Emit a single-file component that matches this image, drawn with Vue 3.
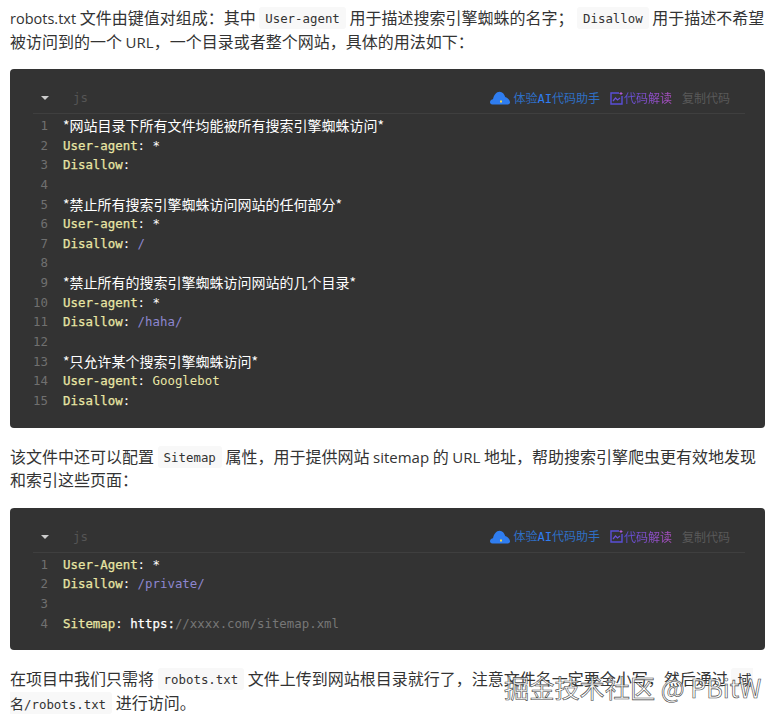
<script setup>
const blockA = [
  [['zh', '*网站目录下所有文件均能被所有搜索引擎蜘蛛访问*']],
  [['key', 'User-agent'], ['pl', ': *']],
  [['key', 'Disallow'], ['pl', ':']],
  [],
  [['zh', '*禁止所有搜索引擎蜘蛛访问网站的任何部分*']],
  [['key', 'User-agent'], ['pl', ': *']],
  [['key', 'Disallow'], ['pl', ': '], ['path', '/']],
  [],
  [['zh', '*禁止所有的搜索引擎蜘蛛访问网站的几个目录*']],
  [['key', 'User-agent'], ['pl', ': *']],
  [['key', 'Disallow'], ['pl', ': '], ['path', '/haha/']],
  [],
  [['zh', '*只允许某个搜索引擎蜘蛛访问*']],
  [['key', 'User-agent'], ['pl', ': '], ['val', 'Googlebot']],
  [['key', 'Disallow'], ['pl', ':']],
]
const blockB = [
  [['key', 'User-Agent'], ['pl', ': *']],
  [['key', 'Disallow'], ['pl', ': '], ['path', '/private/']],
  [],
  [['key', 'Sitemap'], ['pl', ': '], ['url', 'https:'], ['cm', '//xxxx.com/sitemap.xml']],
]
</script>

<template>
  <article class="page">
    <p class="para">
      <span class="ln"><span class="lat sm">robots.txt</span> 文件由键值对组成：其中 <code class="inline">User-agent</code> 用于描述搜索引擎蜘蛛的名字； <code class="inline">Disallow</code> 用于描述不希望</span>
      <span class="ln">被访问到的一个 <span class="lat">URL</span>，一个目录或者整个网站，具体的用法如下：</span>
    </p>

    <section class="block">
      <header class="bar">
        <span class="caret"></span>
        <span class="lang">js</span>
        <span class="spacer"></span>
        <svg class="cloud" viewBox="0 0 20 14" width="20" height="14">
          <path d="M2.5 13.5C.8 13.5 0 12.3 0 11.2 0 9.6 1.4 8.4 3 8.3 3.8 4 6.4 .8 9.6 .8c2.8 0 4.8 2.4 5.6 5.2 2.4.6 4.6 3 4.8 5.2.1 1.3-.8 2.3-2.2 2.3z" fill="#2f7df0" />
          <rect x="10" y="9.5" width="2" height="2" fill="#f2d64b" />
        </svg>
        <span class="assist">体验<b class="ai">AI</b>代码助手</span>
        <svg class="read-icon" viewBox="0 0 13 13" width="13" height="13">
          <path d="M9 1H1v11h11V4" fill="none" stroke="#5a4fd8" stroke-width="1.4" />
          <path d="M3 9l2.5-3 2 2L10 6" fill="none" stroke="#6a4fd8" stroke-width="1.2" />
          <path d="M11 0v3M9.5 1.5h3" stroke="#b05ad0" stroke-width="1" />
        </svg>
        <span class="read">代码解读</span>
        <span class="copy">复制代码</span>
      </header>
      <div class="code">
        <div v-for="(line, i) in blockA" :key="i" class="line">
          <span class="num">{{ i + 1 }}</span>
          <span class="src"><span v-for="(tok, j) in line" :key="j" :class="tok[0]">{{ tok[1] }}</span></span>
        </div>
      </div>
    </section>

    <p class="para after">
      <span class="ln">该文件中还可以配置 <code class="inline">Sitemap</code> 属性，用于提供网站 <span class="lat">sitemap</span> 的 <span class="lat">URL</span> 地址，帮助搜索引擎爬虫更有效地发现</span>
      <span class="ln">和索引这些页面：</span>
    </p>

    <section class="block">
      <header class="bar">
        <span class="caret"></span>
        <span class="lang">js</span>
        <span class="spacer"></span>
        <svg class="cloud" viewBox="0 0 20 14" width="20" height="14">
          <path d="M2.5 13.5C.8 13.5 0 12.3 0 11.2 0 9.6 1.4 8.4 3 8.3 3.8 4 6.4 .8 9.6 .8c2.8 0 4.8 2.4 5.6 5.2 2.4.6 4.6 3 4.8 5.2.1 1.3-.8 2.3-2.2 2.3z" fill="#2f7df0" />
          <rect x="10" y="9.5" width="2" height="2" fill="#f2d64b" />
        </svg>
        <span class="assist">体验<b class="ai">AI</b>代码助手</span>
        <svg class="read-icon" viewBox="0 0 13 13" width="13" height="13">
          <path d="M9 1H1v11h11V4" fill="none" stroke="#5a4fd8" stroke-width="1.4" />
          <path d="M3 9l2.5-3 2 2L10 6" fill="none" stroke="#6a4fd8" stroke-width="1.2" />
          <path d="M11 0v3M9.5 1.5h3" stroke="#b05ad0" stroke-width="1" />
        </svg>
        <span class="read">代码解读</span>
        <span class="copy">复制代码</span>
      </header>
      <div class="code">
        <div v-for="(line, i) in blockB" :key="i" class="line">
          <span class="num">{{ i + 1 }}</span>
          <span class="src"><span v-for="(tok, j) in line" :key="j" :class="tok[0]">{{ tok[1] }}</span></span>
        </div>
      </div>
    </section>

    <p class="para after">
      <span class="ln">在项目中我们只需将 <code class="inline">robots.txt</code> 文件上传到网站根目录就行了，注意文件名一定要全小写，然后通过 <code class="inline open"><span class="czh">域</span></code></span>
      <span class="ln"><code class="inline close"><span class="czh">名</span>/robots.txt</code> 进行访问。</span>
    </p>
    <div class="watermark">掘金技术社区 @ PBitW</div>
  </article>
</template>

<style>
html, body { margin: 0; background: #fff; }
</style>

<style scoped>
.page {
  position: relative;
  box-sizing: border-box;
  width: 782px;
  height: 720px;
  padding: 6px 17px 0 10px;
  overflow: hidden;
  font-family: "Noto Sans CJK SC", sans-serif;
  font-size: 16px;
  color: #333;
}
.para { margin: 0; }
.para.after { margin-top: 17px; }
.ln { display: block; height: 23.5px; line-height: 23.5px; white-space: nowrap; }
.lat { font-family: "Open Sans", sans-serif; font-size: 15px; }
.lat.sm { font-size: 14.5px; }
.inline {
  display: inline-block;
  vertical-align: top;
  margin-top: 1px;
  height: 22px;
  line-height: 23px;
  font-family: "DejaVu Sans Mono", monospace;
  font-size: 12.4px;
  background: #f8f8f8;
  border-radius: 3px;
  padding: 0 6px;
  color: #333;
}
.inline.open { padding-right: 2px; border-radius: 3px 0 0 3px; }
.inline.close { padding-left: 0; border-radius: 0 3px 3px 0; }
.czh { font-family: "Noto Sans CJK SC", sans-serif; font-size: 14px; }
.block {
  margin-top: 16px;
  background: #333;
  border-radius: 4px;
  padding: 18px 20px 17px 23px;
}
.bar {
  display: flex;
  align-items: center;
  height: 22px;
  padding-bottom: 4px;
  border-bottom: 1px solid #3f3f3f;
  font-size: 12px;
  line-height: 20px;
}
.caret {
  margin-left: 8px;
  width: 0;
  height: 0;
  border-left: 4.5px solid transparent;
  border-right: 4.5px solid transparent;
  border-top: 4px solid #ccc;
}
.lang {
  margin-left: 24px;
  color: #555;
  font-family: "DejaVu Sans Mono", monospace;
  font-size: 12.4px;
}
.spacer { flex: 1; }
.cloud { margin-right: 3px; }
.assist { color: #2f6fc4; }
.ai { font-family: "DejaVu Sans Mono", monospace; font-weight: 400; font-size: 12px; color: #2f7df0; }
.read-icon { margin-left: 10px; margin-right: 1px; }
.read {
  background: linear-gradient(90deg, #5a4fd8, #b04fc0);
  -webkit-background-clip: text;
  background-clip: text;
  color: transparent;
}
.copy { margin-left: 10px; margin-right: 15px; color: #5a5a5a; }
.code {
  padding-top: 2px;
  font-family: "DejaVu Sans Mono", monospace;
  font-size: 12.4px;
  color: #fff;
}
.line { display: flex; height: 19.65px; line-height: 19.65px; white-space: pre; }
.num { width: 15px; flex: none; text-align: right; color: #707070; }
.src { margin-left: 15px; }
.zh { font-family: "Noto Sans CJK SC", sans-serif; font-size: 14px; line-height: 19px; vertical-align: 1px; color: #fff; }
.key { color: #e9e6a5; -webkit-text-stroke: 0.25px #e9e6a5; }
.pl { color: #fff; }
.val { color: #e9e6a5; }
.path { color: #8d86cf; }
.url { color: #fff; -webkit-text-stroke: 0.25px #fff; }
.cm { color: #777; }
.watermark {
  position: absolute;
  left: 504px;
  top: 670px;
  font-family: "Noto Sans CJK SC", "Open Sans", sans-serif;
  font-size: 25.2px;
  line-height: 34px;
  white-space: nowrap;
  color: rgba(255, 255, 255, 0.75);
  -webkit-text-stroke: 0.6px #444;
}
</style>
